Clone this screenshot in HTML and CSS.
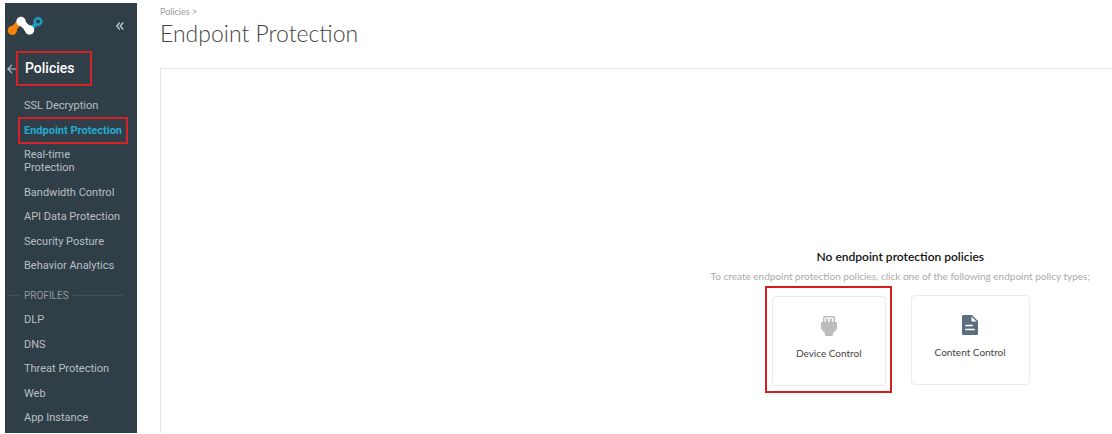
FILE: index.html
```html
<!DOCTYPE html>
<html lang="en">
<head>
    <meta charset="UTF-8">
    <meta name="viewport" content="width=device-width, initial-scale=1.0">
    <title>Endpoint Protection</title>
    <link rel="stylesheet" href="styles.css">
</head>
<body>
    <div class="sidebar">
        <div class="sidebar-top">
            <svg class="logo" width="36" height="20" viewBox="0 0 36 20" role="img" aria-label="Home">
                <path d="M2.500 11Q7 9.500 9 5.500L14 9Q10 12 9.300 16Z" fill="#f5820b"/>
                <circle cx="5.300" cy="14.500" r="4.600" fill="#f5820b"/>
                <path d="M23.500 13.500L29 8" stroke="#1b9cc0" stroke-width="4"/>
                <circle cx="31" cy="5.500" r="3.300" fill="#303e48" stroke="#1b9cc0" stroke-width="2.600"/>
                <path d="M10.500 8.500Q16 10.500 18.500 16L26 11Q20 9 17.500 3.500Z" fill="#fff"/>
                <circle cx="14" cy="5.500" r="4.700" fill="#fff"/>
                <circle cx="22.500" cy="14" r="4.700" fill="#fff"/>
            </svg>
            <button class="collapse-button" aria-label="Collapse menu">
                <svg width="8" height="8" viewBox="0 0 8 8" fill="none" stroke="#b9bfc3" stroke-width="1.5">
                    <path d="M3.800 .5L.8 4L3.800 7.500M7.300 .5L4.300 4L7.300 7.500"/>
                </svg>
            </button>
        </div>
        <div class="sidebar-title">
            <button class="back-button" aria-label="Back">
                <svg width="10" height="10" viewBox="0 0 10 10" fill="none" stroke="#b9bfc3" stroke-width="1.2">
                    <path d="M9.500 5H1M5 .8L.9 5L5 9.200"/>
                </svg>
            </button>
            <h2 class="highlight">Policies</h2>
        </div>
        <nav class="menu">
            <a href="#">SSL Decryption</a>
            <a href="#" class="active highlight">Endpoint Protection</a>
            <a href="#">Real-time<br>Protection</a>
            <a href="#">Bandwidth Control</a>
            <a href="#">API Data Protection</a>
            <a href="#">Security Posture</a>
            <a href="#">Behavior Analytics</a>
            <div class="menu-heading">PROFILES</div>
            <a href="#">DLP</a>
            <a href="#">DNS</a>
            <a href="#">Threat Protection</a>
            <a href="#">Web</a>
            <a href="#">App Instance</a>
        </nav>
    </div>
    <main class="content">
        <div class="breadcrumb"><a href="#">Policies</a> &gt;</div>
        <h1>Endpoint Protection</h1>
        <div class="panel">
            <div class="empty-state">
                <h3>No endpoint protection policies</h3>
                <p>To create endpoint protection policies, click one of the following endpoint policy types;</p>
                <div class="policy-types">
                    <div class="highlight card-highlight">
                        <button class="card">
                            <svg width="18" height="20" viewBox="0 0 18 20">
                                <path fill="#bdbdbd" fill-rule="evenodd" d="M4.500 0h9a1.500 1.500 0 0 1 1.500 1.500V6h1q1 0 1 1v5q0 1-.8 1.900L13 17v2q0 1-1 1H6q-1 0-1-1v-2l-3.200-3.100Q1 13 1 12V7q0-1 1-1h1V1.500A1.500 1.500 0 0 1 4.500 0zM4.500 1.500V6h9V1.500z"/>
                                <path fill="#bdbdbd" d="M5.800 2.800h2.400v3.200H5.800zM9.800 2.800h2.400v3.200H9.800z"/>
                            </svg>
                            <span>Device Control</span>
                        </button>
                    </div>
                    <button class="card">
                        <svg width="18" height="20" viewBox="0 0 18 20">
                            <path fill="#5d6d80" fill-rule="evenodd" d="M2.500 0H11l6 6v12.500q0 1.500-1.500 1.500h-13Q1 20 1 18.500v-17Q1 0 2.500 0zM10.500 1.500v5h5zM4.200 9.700v1.600h7.600V9.700zM4.200 13.700v1.600h9.600v-1.600z"/>
                        </svg>
                        <span>Content Control</span>
                    </button>
                </div>
            </div>
        </div>
    </main>
</body>
</html>
```
FILE: styles.css
```css
* {
    box-sizing: border-box;
}
body {
    margin: 0;
    padding: 3px 0 1px 5px;
    min-height: 100vh;
    display: flex;
    background-color: #fff;
    font-family: Lato, sans-serif;
    overflow-x: hidden;
}
a {
    color: inherit;
    text-decoration: none;
}
button {
    border: none;
    padding: 0;
    background: none;
    font-family: inherit;
    cursor: pointer;
}
svg {
    display: block;
}
.highlight {
    border: 2px solid #d2232a;
}

/* sidebar */
.sidebar {
    width: 132px;
    flex-shrink: 0;
    display: flex;
    flex-direction: column;
    background-color: #303e48;
    color: #b9bfc3;
    font-family: Roboto, sans-serif;
}
.sidebar-top {
    display: flex;
    align-items: center;
    justify-content: space-between;
    padding: 13px 13px 0 2px;
}
.sidebar-title {
    display: flex;
    align-items: center;
    margin-top: 15px;
}
.back-button {
    width: 11px;
    padding-left: 2px;
}
.sidebar-title h2 {
    margin: 0;
    padding: 0 15px 0 7px;
    font-size: 14px;
    line-height: 31px;
    font-weight: 500;
    color: #fff;
}
.menu {
    flex-grow: 1;
    display: flex;
    flex-direction: column;
    justify-content: space-between;
    align-items: flex-start;
    padding: 13px 0 9px 19px;
    font-size: 11px;
    line-height: 13px;
}
.menu .active {
    margin: -7px 0 -7px -6px;
    padding: 5px 4px;
    font-weight: 700;
    color: #25a9d0;
}
.menu-heading {
    display: flex;
    align-items: center;
    align-self: stretch;
    gap: 4px;
    margin: 5px 14px 0 -17px;
    font-size: 10px;
    color: #8f989e;
}
.menu-heading::before,
.menu-heading::after {
    content: "";
    height: 1px;
    width: 13px;
    background-color: #43515b;
}
.menu-heading::after {
    flex-grow: 1;
}

/* content */
.content {
    flex-grow: 1;
    display: flex;
    flex-direction: column;
    padding: 2px 0 0 23px;
}
.breadcrumb {
    font-size: 9px;
    line-height: 13px;
    color: #999;
}
h1 {
    margin: 0 0 20px;
    font-size: 23px;
    line-height: 30px;
    font-weight: 300;
    color: #444;
}
.panel {
    flex-grow: 1;
    display: flex;
    justify-content: flex-end;
    border: 1px solid #e4e4e4;
    border-width: 1px 0 0 1px;
    padding: 180px 22px 40px;
}
.empty-state {
    text-align: center;
}
.empty-state h3 {
    margin: 0;
    font-size: 12px;
    line-height: 16px;
    font-weight: 600;
    color: #111;
}
.empty-state p {
    margin: 3px 0 2px;
    font-size: 10px;
    line-height: 16px;
    color: #aaa;
}
.policy-types {
    display: flex;
    justify-content: center;
    align-items: center;
    gap: 19px;
    padding-right: 6px;
}
.card-highlight {
    border-color: #d51f1f;
    padding: 8px 4px 5px 5px;
}
.card {
    display: flex;
    flex-direction: column;
    align-items: center;
    gap: 11px;
    padding: 19px 23px 26px;
    border: 1px solid #eaeaea;
    border-radius: 4px;
    background-color: #fff;
    font-size: 10px;
    line-height: 12px;
    color: #444;
}
```
